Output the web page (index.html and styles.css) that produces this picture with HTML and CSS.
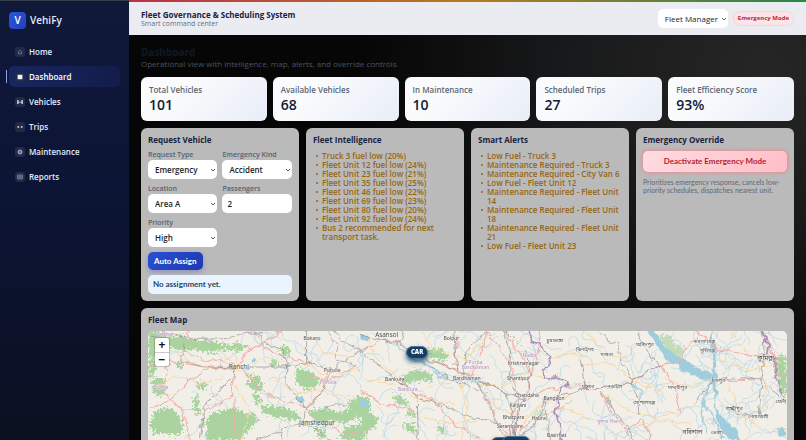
FILE: index.html
```html
<!DOCTYPE html>
<html lang="en">
<head>
<meta charset="utf-8">
<meta name="viewport" content="width=device-width, initial-scale=1">
<title>VehiFy - Dashboard</title>
<link rel="stylesheet" href="styles.css">
</head>
<body>
<div class="shell">
  <aside class="sidebar">
    <div class="brand"><span class="brand-mark">V</span><span>VehiFy</span></div>
    <nav class="nav">
      <a href="#home"><svg class="ico" viewBox="0 0 10 10"><path d="M3 5.2 5 3.4l2 1.8M3.6 5v1.8h2.8V5" class="thin"/></svg>Home</a>
      <a href="#dashboard" class="active" aria-current="page"><svg class="ico" viewBox="0 0 10 10"><path d="M2.6 2.8h4.8v4.4H2.6z" class="solid"/></svg>Dashboard</a>
      <a href="#vehicles"><svg class="ico" viewBox="0 0 10 10"><path d="M2.5 3v4M7.5 3v4M3.2 3v4M6.8 3v4M3 5.2h4" class="line"/></svg>Vehicles</a>
      <a href="#trips"><svg class="ico" viewBox="0 0 10 10"><path d="M2.2 5h2M5.8 5h2M3.4 4v2M6.6 4v2" class="line"/></svg>Trips</a>
      <a href="#maintenance"><svg class="ico" viewBox="0 0 10 10"><circle cx="5" cy="5" r="1.9" class="line"/><path d="M5 2.4v5.2M2.4 5h5.2" class="thin"/></svg>Maintenance</a>
      <a href="#reports"><svg class="ico" viewBox="0 0 10 10"><path d="M2.5 3h5v4h-5zM4.2 3v4M5.8 3v4M2.5 5h5" class="thin"/></svg>Reports</a>
    </nav>
  </aside>
  <div class="main">
    <header class="topbar">
      <div class="heading">
        <strong>Fleet Governance &amp; Scheduling System</strong>
        <span>Smart command center</span>
      </div>
      <select class="field role" aria-label="Role"><option>Fleet Manager</option></select>
      <span class="mode">Emergency Mode</span>
    </header>
    <main class="content">
      <div class="intro">
        <h1>Dashboard</h1>
        <p>Operational view with intelligence, map, alerts, and override controls</p>
      </div>
      <section class="stats">
        <div class="stat"><span>Total Vehicles</span><b>101</b></div>
        <div class="stat"><span>Available Vehicles</span><b>68</b></div>
        <div class="stat"><span>In Maintenance</span><b>10</b></div>
        <div class="stat"><span>Scheduled Trips</span><b>27</b></div>
        <div class="stat"><span>Fleet Efficiency Score</span><b>93%</b></div>
      </section>
      <section class="panels">
        <form class="panel">
          <h2>Request Vehicle</h2>
          <div class="form-grid">
            <label>Request Type<select class="field"><option>Emergency</option></select></label>
            <label>Emergency Kind<select class="field"><option>Accident</option></select></label>
            <label>Location<select class="field"><option>Area A</option></select></label>
            <label>Passengers<input class="field" type="text" inputmode="numeric" value="2"></label>
            <label>Priority<select class="field"><option>High</option></select></label>
          </div>
          <button type="button" class="assign">Auto Assign</button>
          <p class="result">No assignment yet.</p>
        </form>
        <div class="panel">
          <h2>Fleet Intelligence</h2>
          <ul>
            <li>Truck 3 fuel low (20%)</li>
            <li>Fleet Unit 12 fuel low (24%)</li>
            <li>Fleet Unit 23 fuel low (21%)</li>
            <li>Fleet Unit 35 fuel low (25%)</li>
            <li>Fleet Unit 46 fuel low (22%)</li>
            <li>Fleet Unit 69 fuel low (23%)</li>
            <li>Fleet Unit 80 fuel low (20%)</li>
            <li>Fleet Unit 92 fuel low (24%)</li>
            <li>Bus 2 recommended for next transport task.</li>
          </ul>
        </div>
        <div class="panel">
          <h2>Smart Alerts</h2>
          <ul>
            <li>Low Fuel - Truck 3</li>
            <li>Maintenance Required - Truck 3</li>
            <li>Maintenance Required - City Van 6</li>
            <li>Low Fuel - Fleet Unit 12</li>
            <li>Maintenance Required - Fleet Unit 14</li>
            <li>Maintenance Required - Fleet Unit 18</li>
            <li>Maintenance Required - Fleet Unit 21</li>
            <li>Low Fuel - Fleet Unit 23</li>
          </ul>
        </div>
        <div class="panel">
          <h2>Emergency Override</h2>
          <button type="button" class="deactivate">Deactivate Emergency Mode</button>
          <p class="note">Prioritizes emergency response, cancels low-priority schedules, dispatches nearest unit.</p>
        </div>
      </section>
      <section class="panel map-panel">
        <h2>Fleet Map</h2>
        <div class="map">
          <svg class="tiles" viewBox="0 0 1914 420" role="img" aria-label="Map of West Bengal and surroundings">
            <defs>
              <filter id="ragged" x="-5%" y="-5%" width="110%" height="110%">
                <feTurbulence type="fractalNoise" baseFrequency="0.12" numOctaves="3" seed="4"/>
                <feDisplacementMap in="SourceGraphic" scale="36" xChannelSelector="R" yChannelSelector="G"/>
              </filter>
              <filter id="winding" x="-5%" y="-5%" width="110%" height="110%">
                <feTurbulence type="fractalNoise" baseFrequency="0.04" numOctaves="2" seed="9"/>
                <feDisplacementMap in="SourceGraphic" scale="22" xChannelSelector="R" yChannelSelector="G"/>
              </filter>
            </defs>
            <g id="streams"></g>
            <!-- western part -->
            <g transform="translate(-39 -93)">
              <g class="wood">
                <path d="M40 93h50l10 20 40-8 30 14 60 4 50 12 30-8 30 14-30 14-50-6-40 10-40-12-50 6-30-12-24 14-10 18-26-6z"/>
                <path d="M40 170l20 6 4 30-8 20-16 4zM50 240l20-10 14 10 10 24-14 26-24-10z"/>
                <path d="M60 335l40-14 34 24 10 30-12 34-30-10-40 4-20-30z"/>
                <path d="M178 284l14 6-2 30 10 16-14 8-12-20zM180 250l32-4 6 16-30 6z"/>
                <path d="M236 336l60-14 40 20 24-6 10 30-30 20-20 34h-110l10-30-14-24z"/>
                <path d="M480 206l40 4 30 24-4 30-34 4-30-22zM400 184l24-6 4 16-24 6zM440 136l18 6 6 22-16 8-14-18z"/>
                <path d="M345 222l31 10 8 30-20 12-28-18zM376 316l60 4 60 20-10 22-50-8-50-10zM520 334l50-10 40 14 30-12 24 20-20 24-60-6-40 10z"/>
                <path d="M640 300l40-14 24 10v50l-40 10-24-16zM630 380l60-8v48h-80zM120 190l20-4 6 14-22 4zM60 150l24-6 6 16-20 6z"/>
                <path d="M350 280l20 6 14 20-24 4zM540 380l24 4 10 24-26 4z"/>
              </g>
              <path class="water" d="M484 292l20-6 6 14-16 12zM346 178l20-6 4 6-20 8z"/>
              <g class="minor">
                <path d="M110 150l40 30 60 20 80 4M300 120l6 80M250 150l50 50 60 40M330 210l60-40 60 20M60 260l60-30 80 20 60-20M420 240l60 40 60-10 120 30M500 180l60 40 100-10M300 260l40 60-20 100M540 120l30 40 80 10"/>
              </g>
              <g class="major">
                <path d="M40 325l60-20 60-60 60-40 80 2M160 93l-20 60 60 24 50 4 50 20M310 200l20-40 50-30 60-37M320 200l30 40 40 36 60 30 70 16M40 200l60-20 70 14 130 10M300 205l-10 80-50 30-60 34M300 290l-4 130M360 93l30 50 60 30 70 14 70 24M580 210l-20 70-50 40M510 322l30 40 80 30 70 10M100 190l-20 80 60 60 30 90M520 230l60 10 80-40"/>
              </g>
              <g class="rail">
                <path d="M40 110l80-6 60 14 90-2 60-16 50-2M330 201h120l64-14 76 22M300 208l-4 20-30 30-60 60-10 102M514 93v94M590 210l-30 70-50 46-4 40-60 22-80 34M590 210l70-50 40-16M600 93l20 30 60 30M370 100l30 40 40 10 16 40-4 60 40 50 20 26M438 388l-4 32M490 370l40 10 60 40M140 180l60 20 100 4M150 130l-10 50"/>
              </g>
              <path class="border faint" d="M580 93l30 50-10 40 50 10 20 20M560 330l40-20 40 10"/>
              <g class="place">
                <text x="311" y="206" class="city">Ranchi</text><text x="530" y="121">Bokaro</text><text x="590" y="216">Purulia</text>
                <text x="545" y="375" class="city">Jamshedpur</text>
              </g>
              <g class="district"><text x="578" y="253">Purulia</text><text x="76" y="266">Gumla</text><text x="90" y="108">Latehar</text></g>
            </g>
            <!-- central part -->
            <g transform="translate(636 -93)">
              <g class="wood">
                <path d="M110 242l50-32 50 10 10 24-40-4-40 8zM0 342l30-8 24 24-14 30-40 12zM200 150l40-4 26 20-10 16-50-8zM96 284l30 6 20 20-20 6-26-14zM140 320l20 14 6 20-24-6zM130 366l40 10-6 24-30-10zM230 376l26 4-4 20-20-8z"/>
                <path d="M514 340l30-16 10 20-30 6z" opacity=".5"/>
              </g>
              <path class="river" d="M100 130l60 50 40 10 34 36 50 14 50 0 30 16"/>
              <path class="water" d="M0 290l14 8 14 18-10 12-18-4zM0 104l30 8-10 14-20-4z"/>
              <g class="minor">
                <path d="M20 100l30 80 70 60M0 240l100 10 80 50 100 10M180 93l40 60 100 20 60-60M300 250l20 80-20 90M200 260l100-20 60-60M360 250l60 10 80-40 60 20M480 380l60-70 90-20M560 180l60-20 70 10M380 300l60 40 80 10M180 350l80 20 90-10M600 320l90 40"/>
              </g>
              <g class="major">
                <path d="M0 150l60-30 60 6 50 40 60 20 60 30 60 10M110 242l60 40 50 20 60 70 80 48M380 93l40 60 30 40 20 80-10 60-10 70M430 93l50 70 30 60-10 60-30 60-10 70M320 236l-40-40 10-90M330 230l30-70 20-67M350 250l30 50 30 60 30 46M500 240l30-60 10-87M500 300l50-30 70-10 70-16M470 400l60-50 60-20 50-30M0 270l60 40 100 20"/>
              </g>
              <g class="rail">
                <path d="M0 106l60 14 60 10 60 46 60 14 60 26 56 26 90 40 50 20M0 160l36 20 60 52 74 50 4 138M280 93l8 120M350 250l30 60 30 60 26 50M356 240l80 40 20 60-10 80M380 93l-60 60-10 70M430 93l20 60-4 80 30 70-20 110M436 93l60 60 14 70-6 60-34 60-10 70M170 294l80 20 80 36 90 20M546 298l80-16 60-20M550 300l-30 80-50 30M110 140l20-47M190 190l50 30 60 30 80 30M570 420l-10-60-10-60"/>
              </g>
              <path class="border" d="M506 93l4 30 30 10 8 20 22 14-6 30-16 16 4 24 30-6 30 10 12 10-20 14-16 24 4 26-8 30 16 26-2 50"/>
              <g class="place">
                <text x="79" y="111" class="city">Asansol</text><text x="273" y="119">Bolpur</text><text x="103" y="244">Bankura</text>
                <text x="319" y="241">Bardhaman</text><text x="489" y="194">Krishnanagar</text><text x="474" y="241">Shantipur</text>
                <text x="499" y="290">Chandaha</text><text x="472" y="320">Kalyani</text><text x="580" y="300">Bangaon</text>
                <text x="459" y="358">Bhatpara</text><text x="534" y="360">Habra</text><text x="448" y="385">Serampore</text><text x="588" y="411">Basirhat</text>
                <text x="583" y="125">চুয়াডাঙ্গা</text><text x="672" y="154">ঝিনাইদহ</text><text x="682" y="263">যশোর</text>
              </g>
              <g class="district"><text x="506" y="170">Nadia</text><text x="345" y="191">Purba</text><text x="345" y="208">Bardhaman</text><text x="142" y="274">Bankura</text></g>
            </g>
            <!-- eastern part -->
            <g transform="translate(1296 -93)">
              <g class="wood">
                <path d="M584 172l30-8 4 110-10 16-12-30-10-50z"/>
                <path d="M230 104l40 2 10 24 32 14-6 26-30 6-30-30z" opacity=".65"/>
              </g>
              <path class="water" d="M200 93l20 2 24 30 24 32 40 18 40 28 40 14 8 10v-60l-8-60 6-14 8 60 6 70-2 90 20 40 40 40 14 27h-40l-24-40-14-60-4-66-50-24-40-20-50-26-30-46z"/>
              <path class="water" d="M584 388l20-8 14 10v16l-24 4z"/>
              <path class="river" d="M400 230l-24 50-16 60 20 60M364 310l40 50 20 60M150 250l30 20-4 40"/>
              <g class="minor">
                <path d="M20 100l60 60 70 20M0 200l80-20 70 60 80 30 60-20M60 270l80 60 80 20 80-10M250 230l60 30 80-20M420 180l80 30 100-20M440 250l30 80 70 60M560 240l-20 100M160 380l80-20 90 10M450 100l40 50 60 30"/>
              </g>
              <g class="major">
                <path d="M0 270l60-10 90-10 40-30 50-24 62-8 10-40 34-30 6-20M346 93l30 20 30 36 70 10 70 6M550 110l30 60 4 40 34 30M60 270l30 60 40 50 20 40M240 196l40 60 20 80M130 390l60-30 20 60M410 240l130 2"/>
              </g>
              <g class="rail">
                <path d="M0 268l60-8 90-10 40-32 46-20M54 93l30 30 30 10 6 50 34 60M170 93l30 60 36 44M0 180l14 90M60 270l40 60 40 50 20 40M150 250l20 30 4 60M410 238l50-4 80 6 64 60M546 93l4 80-10 66-8 104M400 240l-60 70M440 330l90 20"/>
              </g>
              <path class="border" d="M546 93l4 30 14 10-4 30 16 10 8 50 14 50 8 20"/>
              <g class="place">
                <text x="192" y="137">ফরিদপুর</text><text x="370" y="130">নারায়ণগঞ্জ</text><text x="380" y="155">মুন্সিগঞ্জ</text>
                <text x="78" y="168">মাগুরা</text><text x="554" y="181" class="city">কুমিল্লা</text>
                <text x="412" y="247">চাঁদপুর</text><text x="290" y="266">মাদারীপুর</text><text x="102" y="263">নড়াইল</text>
                <text x="190" y="311">গোপালগঞ্জ</text><text x="460" y="331">লক্ষ্মীপুর</text><text x="532" y="354">নোয়াখালী</text>
                <text x="335" y="402" class="city">বরিশাল</text><text x="408" y="403">ভোলা</text><text x="600" y="310">ফেনী</text>
              </g>
              <g class="district"><text x="86" y="368">খুলনা বিভাগ</text></g>
            </g>
          </svg>
          <div class="zoom"><button type="button" aria-label="Zoom in">+</button><button type="button" aria-label="Zoom out">−</button></div>
          <span class="marker asansol">CAR</span>
          <span class="marker kolkata"></span>
          <span class="marker howrah"></span>
        </div>
      </section>
    </main>
  </div>
</div>
<script src="map.js"></script>
</body>
</html>
```
FILE: styles.css
```css
* { box-sizing: border-box; }
body {
  margin: 0;
  font-family: "Trebuchet MS", "Open Sans", sans-serif;
  font-size: 8px;
  line-height: 9px;
  color: #18233f;
  background: #060606;
}
h1, h2, p, ul { margin: 0; padding: 0; }
button, input, select { font: inherit; color: inherit; margin: 0; }

.shell {
  display: grid;
  grid-template-columns: 16% minmax(0, 1fr);
  height: 100vh;
  overflow: hidden;
}
.sidebar {
  padding: 11px 9px;
  background: linear-gradient(180deg, #10193a 0%, #0b1433 45%, #0c101c 100%);
  border-top: 1px solid #39404d;
  color: #e3eafa;
}
.brand {
  display: flex;
  align-items: center;
  gap: 4px;
  font-size: 10px;
  font-weight: 600;
}
.brand-mark {
  display: grid;
  place-items: center;
  width: 17px;
  height: 17px;
  border-radius: 4px;
  background: linear-gradient(135deg, #2855de, #2340bd);
  color: #fff;
}
.nav { display: grid; gap: 4px; margin-top: 12px; }
.nav a {
  position: relative;
  display: flex;
  align-items: center;
  gap: 4px;
  height: 21px;
  padding: 0 6px;
  border-radius: 5px;
  color: inherit;
  font-weight: 600;
  text-decoration: none;
}
.nav .active { background: linear-gradient(90deg, #17265e, #131d4b); color: #fff; }
.nav .active::before {
  content: "";
  position: absolute;
  left: -3px;
  top: 4px;
  width: 1px;
  height: 13px;
  background: #8ea2ee;
}
.ico { width: 10px; height: 10px; border-radius: 3px; background: #222b49; }
.ico .line { fill: none; stroke: #d3dbea; stroke-width: 0.8; }
.ico .thin { fill: none; stroke: #a8b2c9; stroke-width: 0.5; }
.ico .solid { fill: #eef2ff; }

.main {
  min-width: 0;
  background:
    radial-gradient(ellipse 60% 65% at 94% 14%, #262626 0%, #18191a 50%, transparent 100%),
    #060606;
}
.topbar {
  display: flex;
  align-items: center;
  gap: 5px;
  height: 35px;
  padding: 0 12px;
  border-top: 2px solid;
  border-image: linear-gradient(90deg, #b93244, #b67b22 50%, #28864a) 1;
  background: #ebecf1;
}
.heading { display: grid; margin-right: auto; }
.heading strong { font-size: 8px; }
.heading span { font-size: 7px; color: #69717f; }
.field {
  width: 100%;
  height: 19px;
  padding: 0 5px;
  border: 0;
  border-radius: 5px;
  background-color: #fff;
  color: #1d1d1f;
  font-size: 8px;
  line-height: 12px;
}
select.field {
  appearance: none;
  padding: 0 8px 0 7px;
  background-image: url("data:image/svg+xml,%3Csvg xmlns='http://www.w3.org/2000/svg' viewBox='0 0 6 4'%3E%3Cpath d='M1 1l2 2 2-2' fill='none' stroke='%23333' stroke-width='.8'/%3E%3C/svg%3E");
  background-position: right 1px center;
  background-repeat: no-repeat;
  background-size: 6px 4px;
}
.topbar .role { width: 70px; }
.mode {
  padding: 2px 4px;
  border: 1px solid #fbd3d8;
  border-radius: 8px;
  background: #fce5e8;
  color: #bd2739;
  font-size: 6px;
  font-weight: 700;
}

.content { display: grid; gap: 7px; padding: 11px 12px; }
.intro h1 { font-size: 10px; line-height: 12px; color: #101828; }
.intro p { line-height: 12px; color: #4b5361; }
.stats { display: grid; grid-template-columns: repeat(5, 1fr); gap: 6px; }
.stat {
  display: grid;
  align-content: center;
  gap: 2px;
  height: 44px;
  padding: 0 8px;
  border-radius: 6px;
  background: linear-gradient(135deg, #fafbfc 30%, #e8edf8);
}
.stat span { font-weight: 600; color: #5b6676; }
.stat b { font-size: 14px; line-height: 17px; font-weight: 600; color: #111a34; }

.panels { display: grid; grid-template-columns: repeat(4, minmax(0, 1fr)); gap: 7px; }
.panel { padding: 7px; border-radius: 6px; background: #bababa; }
.panel h2 { font-size: 8px; line-height: 10px; }
.form-grid { display: grid; grid-template-columns: 1fr 1fr; gap: 5px; margin-top: 5px; }
.form-grid label { font-size: 7px; font-weight: 600; color: #586271; }
.form-grid .field { display: block; margin-top: 1px; }
.assign, .deactivate, .result { font-family: "Trebuchet MS", Lato, sans-serif; }
.assign {
  display: block;
  height: 18px;
  margin-top: 5px;
  padding: 0 6px;
  border: 0;
  border-radius: 5px;
  background: linear-gradient(135deg, #2850d4, #2039b2);
  box-shadow: 0 2px 5px #2745c255;
  color: #fff;
  font-weight: 700;
}
.result {
  margin-top: 5px;
  padding: 5px;
  border-radius: 5px;
  background: #eaf4ff;
  color: #294765;
  font-weight: 700;
}
.panel ul { margin-top: 6px; list-style: none; }
.panel li { position: relative; padding-left: 9px; color: #976610; font-weight: 600; }
.panel li::before {
  content: "";
  position: absolute;
  left: 3px;
  top: 4px;
  width: 2px;
  height: 2px;
  border-radius: 50%;
  background: #976610;
}
.deactivate {
  width: 100%;
  height: 21px;
  margin-top: 6px;
  border: 0;
  border-radius: 5px;
  background: linear-gradient(135deg, #ffdce0, #ffbec8);
  box-shadow: 0 0 2px 2px #d99ea4;
  color: #b91d32;
  font-weight: 700;
}
.note {
  margin-top: 6px;
  font-family: "Trebuchet MS", Lato, sans-serif;
  font-size: 7px;
  line-height: 8px;
  color: #5f6876;
}

.map { position: relative; margin-top: 6px; border-radius: 5px; overflow: hidden; }
.tiles { display: block; width: 100%; background: #f2efe9; }
.tiles path { fill: none; }
.wood { filter: url(#ragged); }
.tiles .wood path { fill: #abd3a0; }
.major, .minor, .rail, .tiles .border { filter: url(#winding); }
.tiles .water { fill: #9fcddd; filter: url(#winding); }
.tiles .river { stroke: #a5cfde; stroke-width: 5; filter: url(#winding); }
#streams path { stroke: #b3d6e4; stroke-width: 2; }
.minor path { stroke: #f8d9a8; stroke-width: 3; }
.major path { stroke: #f0aca4; stroke-width: 3; }
.rail path { stroke: #8e8b8c; stroke-width: 2; }
.tiles .border { stroke: #ad91b4; stroke-width: 5; }
.tiles .faint { stroke-width: 2; }
.tiles text {
  font-family: "Noto Sans", "Noto Sans Bengali", sans-serif;
  font-size: 15px;
  text-anchor: middle;
  fill: #4c4c4c;
  paint-order: stroke;
  stroke: #f5f3ee;
  stroke-width: 2;
}
.tiles text.city { font-size: 19px; }
.tiles .district text { fill: #b18dbd; }
.zoom {
  position: absolute;
  left: 7px;
  top: 7px;
  display: grid;
  border-radius: 2px;
  background: #fff;
  box-shadow: 0 0 1px 1px #0003;
}
.zoom button {
  width: 14px;
  height: 14px;
  padding: 0;
  border: 0;
  background: none;
  color: #111;
  font-size: 12px;
  font-weight: 700;
  line-height: 14px;
}
.zoom button + button { border-top: 1px solid #ccc; }
.marker {
  position: absolute;
  padding: 1px 4px;
  border: 1px solid #4c7798;
  border-radius: 7px;
  background: #153c63;
  box-shadow: 0 3px 5px #123d66cc;
  color: #fff;
  font-size: 6px;
  font-weight: 800;
}
.asansol { left: 258px; top: 15px; }
.kolkata, .howrah { height: 12px; }
.kolkata { left: 343px; top: 106px; width: 30px; }
.howrah { left: 354px; top: 105px; width: 28px; }
```
FILE: map.js
```js
// Fine stream network: short meandering lines, denser toward the eastern delta.
const layer = document.getElementById("streams");
let seed = 7;
function rand() {
  seed = (seed * 16807) % 2147483647;
  return seed / 2147483647;
}
for (let i = 0; i < 230; i++) {
  let x = Math.pow(rand(), 0.7) * 1914;
  let y = rand() * 420;
  let d = `M${x.toFixed(0)} ${y.toFixed(0)}`;
  let angle = rand() * 6.3;
  for (let k = 0; k < 9; k++) {
    angle += (rand() - 0.5) * 2;
    x += Math.cos(angle) * 12;
    y += Math.sin(angle) * 12;
    d += `L${x.toFixed(0)} ${y.toFixed(0)}`;
  }
  const path = document.createElementNS("http://www.w3.org/2000/svg", "path");
  path.setAttribute("d", d);
  layer.append(path);
}
```
